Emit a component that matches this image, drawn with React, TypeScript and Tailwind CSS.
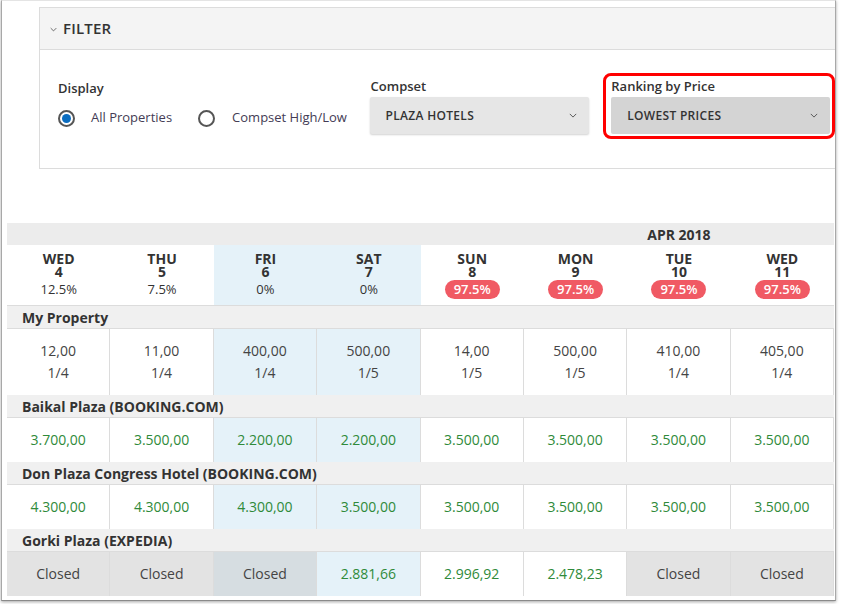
import React from "react";

const Chevron = ({ className = "" }: { className?: string }) => (
  <svg viewBox="0 0 10 6" className={className} fill="none" stroke="currentColor" strokeWidth="1.2">
    <path d="M1 1l4 4 4-4" />
  </svg>
);

const days = [
  { d: "WED", n: "4", p: "12.5%", badge: false, hl: false },
  { d: "THU", n: "5", p: "7.5%", badge: false, hl: false },
  { d: "FRI", n: "6", p: "0%", badge: false, hl: true },
  { d: "SAT", n: "7", p: "0%", badge: false, hl: true },
  { d: "SUN", n: "8", p: "97.5%", badge: true, hl: false },
  { d: "MON", n: "9", p: "97.5%", badge: true, hl: false },
  { d: "TUE", n: "10", p: "97.5%", badge: true, hl: false },
  { d: "WED", n: "11", p: "97.5%", badge: true, hl: false },
];

const myProp = [
  ["12,00", "1/4"],
  ["11,00", "1/4"],
  ["400,00", "1/4"],
  ["500,00", "1/5"],
  ["14,00", "1/5"],
  ["500,00", "1/5"],
  ["410,00", "1/4"],
  ["405,00", "1/4"],
];

const others = [
  {
    name: "Baikal Plaza (BOOKING.COM)",
    vals: ["3.700,00", "3.500,00", "2.200,00", "2.200,00", "3.500,00", "3.500,00", "3.500,00", "3.500,00"],
  },
  {
    name: "Don Plaza Congress Hotel (BOOKING.COM)",
    vals: ["4.300,00", "4.300,00", "4.300,00", "3.500,00", "3.500,00", "3.500,00", "3.500,00", "3.500,00"],
  },
  {
    name: "Gorki Plaza (EXPEDIA)",
    vals: ["Closed", "Closed", "Closed", "2.881,66", "2.996,92", "2.478,23", "Closed", "Closed"],
  },
];

const RowHeader = ({ name }: { name: string }) => (
  <div className="h-[23px] bg-[#f0f0f0] border-b border-[#dcdcdc] pl-[15px] flex items-center text-[14px] font-bold text-[#333]">
    {name}
  </div>
);

export default function App() {
  return (
    <div className="w-[842px] h-[604px] bg-white overflow-hidden font-['Open_Sans',sans-serif] text-[#333]">
      <div className="ml-[1px] w-[835px] h-[601px] border-x border-b border-t border-t-[#e4e4e4] border-x-[#a8a8a8] border-b-[#8a8a8a] shadow-[0_1px_3px_rgba(0,0,0,0.35)] overflow-hidden bg-white">
        {/* Filter panel */}
        <div className="ml-[37px] mt-[6px] border border-[#dcdcdc] border-r-0">
          <div className="h-[42px] bg-[#f4f4f4] border-b border-[#dcdcdc] flex items-center pl-[10px]">
            <Chevron className="w-[7px] h-[5px] text-[#555] mt-[1px]" />
            <span className="ml-[6px] text-[15px] font-semibold text-[#333] tracking-[0.2px]">FILTER</span>
          </div>
          <div className="h-[118px] flex items-start pt-[23px]">
            {/* Display */}
            <div className="ml-[18px] mt-[6px] w-[312px]">
              <div className="h-[18px] leading-[18px] text-[13px] font-semibold text-[#333]">Display</div>
              <div className="mt-[12px] flex items-center h-[18px]">
                <span className="w-[17px] h-[17px] rounded-full border-2 border-[#555] flex items-center justify-center">
                  <span className="w-[9px] h-[9px] rounded-full bg-[#0b6dc0]" />
                </span>
                <span className="ml-[16px] text-[13px] text-[#443c55]">All Properties</span>
                <span className="ml-[26px] w-[17px] h-[17px] rounded-full border-2 border-[#555]" />
                <span className="ml-[17px] text-[13px] text-[#443c55]">Compset High/Low</span>
              </div>
            </div>
            {/* Compset */}
            <div className="mt-[4px] w-[220px]">
              <div className="h-[18px] leading-[18px] text-[13px] font-semibold text-[#333] pl-[1px]">Compset</div>
              <div className="mt-[2px] h-[37px] bg-[#e6e6e6] rounded-[2px] shadow-[0_1px_2px_rgba(0,0,0,0.18)] flex items-center justify-between pl-[16px] pr-[12px]">
                <span className="text-[12px] font-semibold text-[#333] tracking-[0.3px]">PLAZA HOTELS</span>
                <Chevron className="w-[8px] h-[5px] text-[#555]" />
              </div>
            </div>
            {/* Ranking */}
            <div className="ml-[14px] w-[232px] h-[66px] border-[3px] border-[#ff0000] rounded-[8px] pl-[5px] pr-[2px]">
              <div className="h-[20px] leading-[20px] text-[13px] font-semibold text-[#333]">Ranking by Price</div>
              <div className="mt-[1px] h-[37px] bg-[#d4d4d4] rounded-[2px] flex items-center justify-between pl-[16px] pr-[12px]">
                <span className="text-[12px] font-semibold text-[#333] tracking-[0.3px]">LOWEST PRICES</span>
                <Chevron className="w-[8px] h-[5px] text-[#555]" />
              </div>
            </div>
          </div>
        </div>

        {/* Table */}
        <div className="ml-[5px] mt-[54px] w-[827px]">
          <div className="grid grid-cols-8 h-[22px] bg-[#ececec]">
            <div className="col-start-6 col-span-3 flex items-center justify-center text-[14px] font-bold text-[#333]">
              APR 2018
            </div>
          </div>
          <div className="grid grid-cols-8 h-[61px] border-b border-[#dcdcdc]">
            {days.map((d, i) => (
              <div key={i} className={`flex flex-col items-center pt-[7px] ${d.hl ? "bg-[#e5f2f9]" : "bg-white"}`}>
                <div className="text-[14px] font-bold leading-[13px] text-[#333] text-center">
                  {d.d}
                  <br />
                  {d.n}
                </div>
                <div className="mt-[2px] h-[19px] flex items-center justify-center">
                  {d.badge ? (
                    <span className="w-[55px] h-[19px] rounded-full bg-[#f05a64] text-white text-[13px] font-semibold flex items-center justify-center">
                      {d.p}
                    </span>
                  ) : (
                    <span className="text-[13px] text-[#333]">{d.p}</span>
                  )}
                </div>
              </div>
            ))}
          </div>

          <RowHeader name="My Property" />
          <div className="grid grid-cols-8 h-[66px]">
            {myProp.map((v, i) => (
              <div
                key={i}
                className={`border-r border-[#dcdcdc] flex flex-col items-center justify-center text-[14px] leading-[22px] text-[#444] ${
                  i === 2 || i === 3 ? "bg-[#e5f2f9]" : "bg-white"
                }`}
              >
                <div>{v[0]}</div>
                <div>{v[1]}</div>
              </div>
            ))}
          </div>

          {others.map((r, ri) => (
            <div key={ri}>
              <RowHeader name={r.name} />
              <div className="grid grid-cols-8 h-[44px]">
                {r.vals.map((v, i) => {
                  const hl = i === 2 || i === 3;
                  const closed = v === "Closed";
                  const bg = closed ? (hl ? "bg-[#d6dde1]" : "bg-[#e3e3e3]") : hl ? "bg-[#e5f2f9]" : "bg-white";
                  return (
                    <div
                      key={i}
                      className={`border-r border-[#dcdcdc] flex items-center justify-center text-[14px] pb-[1px] ${bg} ${
                        closed ? "text-[#444]" : "text-[#2f8a3a]"
                      }`}
                    >
                      {v}
                    </div>
                  );
                })}
              </div>
            </div>
          ))}
        </div>
      </div>
    </div>
  );
}
